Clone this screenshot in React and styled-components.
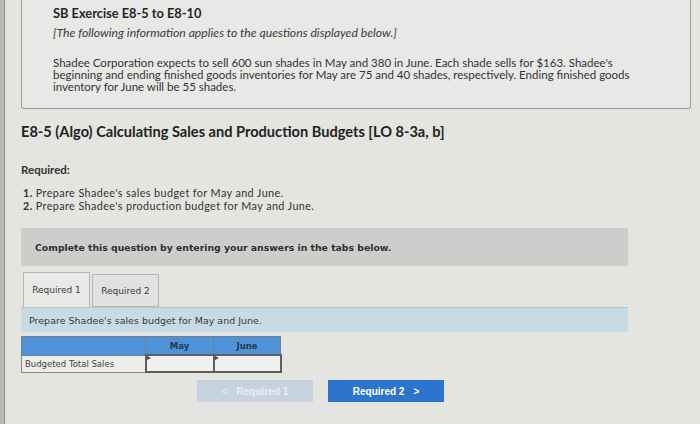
import styled, { createGlobalStyle } from 'styled-components';

const Global = createGlobalStyle`
  html, body {
    margin: 0;
    padding: 0;
    background: #e4e4e1;
    overflow: hidden;
  }
`;

const Page = styled.div`
  width: 700px;
  height: 424px;
  box-sizing: border-box;
  border-left: 4px solid #b8b8b5;
  box-shadow: inset 1px 0 0 #8e8e8c;
  padding-left: 17px;
  font-family: Lato, "Open Sans", sans-serif;
  color: #2b2b2b;
`;

const InfoBox = styled.div`
  width: 670px;
  height: 109px;
  box-sizing: border-box;
  border: 1px solid #9c9c9a;
  border-top: none;
  border-radius: 0 0 3px 3px;
  background: #e8e8e6;
  padding: 5px 0 0 31px;
`;

const BoxTitle = styled.div`
  font-size: 12.8px;
  font-weight: 700;
  color: #262626;
  line-height: 17px;
`;

const Note = styled.div`
  font-style: italic;
  font-size: 12.2px;
  color: #3a3a3a;
  margin-top: 4px;
  line-height: 14px;
`;

const Para = styled.p`
  margin: 17px 0 0;
  font-size: 11.5px;
  line-height: 12px;
  color: #333;
  width: 600px;
`;

const Heading = styled.h2`
  margin: 14px 0 0;
  font-size: 14.6px;
  font-weight: 700;
  color: #222;
  line-height: 18px;
`;

const Required = styled.div`
  margin-top: 22px;
  font-size: 11.5px;
  font-weight: 700;
  color: #333;
`;

const List = styled.ol`
  list-style: none;
  margin: 10px 0 0;
  padding: 0 0 0 2px;
  font-size: 10.8px;
  letter-spacing: 0.4px;
  line-height: 13px;
  color: #333;
`;

const Num = styled.b`
  font-weight: 700;
`;

const Rule = styled.div`
  width: 607px;
  height: 1px;
  background: #cfcfcd;
  margin-top: 16px;
`;

const Banner = styled.div`
  width: 607px;
  height: 37px;
  box-sizing: border-box;
  background: #cdcdcb;
  display: flex;
  align-items: center;
  padding-left: 14px;
  font-family: "DejaVu Sans", Verdana, sans-serif;
  font-size: 9.3px;
  font-weight: 700;
  color: #2f2f2f;
`;

const Tabs = styled.div`
  display: flex;
  gap: 2px;
  margin-top: 6px;
  padding-left: 2px;
  align-items: flex-end;
`;

const Tab = styled.div`
  width: 67px;
  height: ${p => (p.$active ? '35px' : '33px')};
  box-sizing: border-box;
  border: 1px solid #b5b5b3;
  border-bottom: ${p => (p.$active ? 'none' : '1px solid #b5b5b3')};
  background: ${p => (p.$active ? '#e9e9e7' : '#e1e1df')};
  display: flex;
  align-items: center;
  justify-content: center;
  font-family: "DejaVu Sans", Verdana, sans-serif;
  font-size: 9px;
  color: #3a3a3a;
`;

const Instruction = styled.div`
  width: 607px;
  height: 25px;
  box-sizing: border-box;
  background: #c8dbe4;
  border-top: 1px solid #b3c6cf;
  display: flex;
  align-items: center;
  padding-left: 8px;
  font-family: "DejaVu Sans", Verdana, sans-serif;
  font-size: 9.5px;
  color: #3a3a3a;
`;

const Table = styled.table`
  border-collapse: collapse;
  margin-top: 4px;
  font-family: "DejaVu Sans", Verdana, sans-serif;
  font-size: 8.5px;
`;

const Th = styled.th`
  background: #4f92d8;
  border: 1px solid #6b7f95;
  height: 17px;
  padding: 0;
  width: ${p => p.$w}px;
  font-weight: 700;
  color: #24384f;
  text-align: center;
`;

const Label = styled.td`
  border: 1px solid #8a8a8a;
  background: #ececea;
  height: 16px;
  padding: 0 0 0 3px;
  color: #444;
`;

const Cell = styled.td`
  border: 2px solid #5e5e60;
  background: #f0f0ee;
  padding: 0;
  position: relative;
  &::before {
    content: '';
    position: absolute;
    left: 0;
    top: 0;
    border-left: 4px solid #3c4c66;
    border-top: 2px solid transparent;
    border-bottom: 2px solid transparent;
    height: 0;
  }
`;

const Nav = styled.div`
  display: flex;
  gap: 15px;
  margin-top: 7px;
  padding-left: 176px;
`;

const NavButton = styled.div`
  width: 116px;
  height: 22px;
  background: ${p => (p.$disabled ? '#c6d3df' : '#2d74cc')};
  color: ${p => (p.$disabled ? '#e9eef3' : '#ffffff')};
  display: flex;
  align-items: center;
  justify-content: center;
  gap: 9px;
  font-family: "Liberation Sans", Arial, sans-serif;
  font-size: 10px;
  font-weight: 700;
`;

export default function App() {
  return (
    <Page>
      <Global />
      <InfoBox>
        <BoxTitle>SB Exercise E8-5 to E8-10</BoxTitle>
        <Note>[The following information applies to the questions displayed below.]</Note>
        <Para>
          Shadee Corporation expects to sell 600 sun shades in May and 380 in June. Each shade sells for $163. Shadee's
          beginning and ending finished goods inventories for May are 75 and 40 shades, respectively. Ending finished goods
          inventory for June will be 55 shades.
        </Para>
      </InfoBox>
      <Heading>E8-5 (Algo) Calculating Sales and Production Budgets [LO 8-3a, b]</Heading>
      <Required>Required:</Required>
      <List>
        <li><Num>1.</Num> Prepare Shadee's sales budget for May and June.</li>
        <li><Num>2.</Num> Prepare Shadee's production budget for May and June.</li>
      </List>
      <Rule />
      <Banner>Complete this question by entering your answers in the tabs below.</Banner>
      <Tabs>
        <Tab $active>Required 1</Tab>
        <Tab>Required 2</Tab>
      </Tabs>
      <Instruction>Prepare Shadee's sales budget for May and June.</Instruction>
      <Table>
        <thead>
          <tr>
            <Th $w={123}></Th>
            <Th $w={67}>May</Th>
            <Th $w={66}>June</Th>
          </tr>
        </thead>
        <tbody>
          <tr>
            <Label>Budgeted Total Sales</Label>
            <Cell />
            <Cell />
          </tr>
        </tbody>
      </Table>
      <Nav>
        <NavButton $disabled><span>&lt;</span><span>Required 1</span></NavButton>
        <NavButton><span>Required 2</span><span>&gt;</span></NavButton>
      </Nav>
    </Page>
  );
}
